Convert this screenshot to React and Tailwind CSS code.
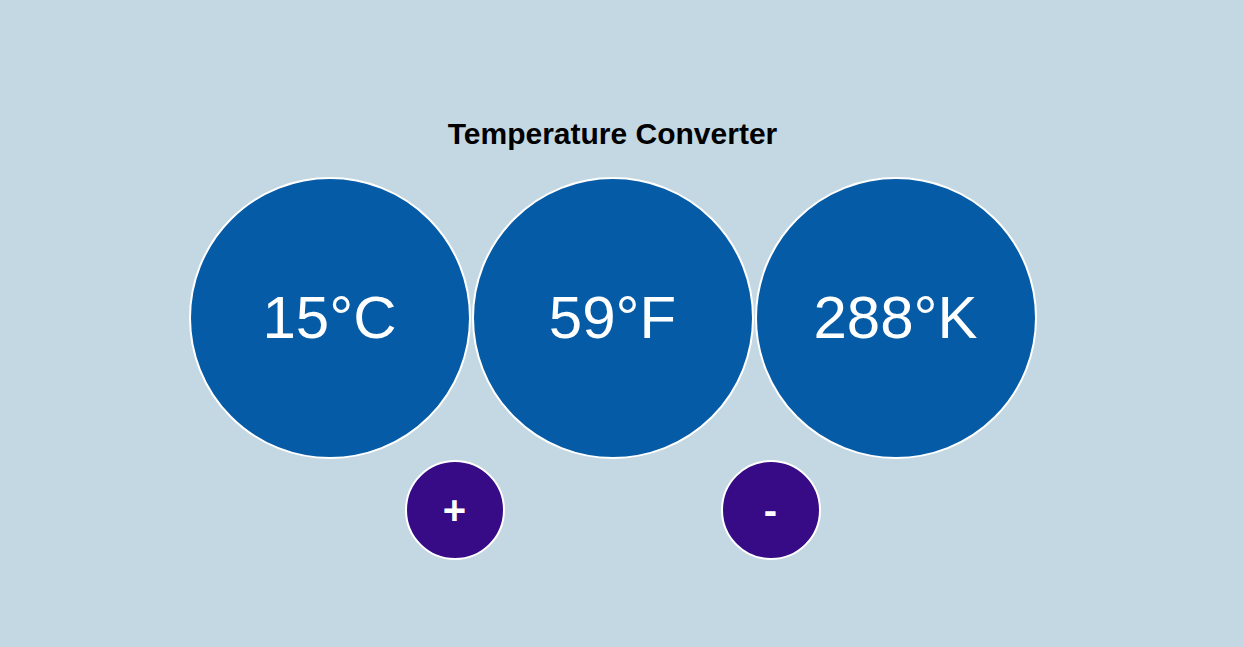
import React, { useState } from 'react';

function App() {
  const [celsius, setCelsius] = useState(15);

  const fahrenheit = Math.round((celsius * 9) / 5 + 32);
  const kelvin = Math.round(celsius + 273);

  const circle =
    'w-[282px] h-[282px] rounded-full bg-[#055ba6] border-2 border-white flex items-center justify-center text-white text-[60px]';
  const btn =
    'w-[100px] h-[100px] rounded-full bg-[#370b85] border-2 border-white flex items-center justify-center text-white text-[40px] font-bold leading-none';

  return (
    <div
      className="min-h-screen w-full bg-[#c4d8e3] flex flex-col items-center pr-[18px] pt-[117px]"
      style={{ fontFamily: '"Liberation Sans", Arial, sans-serif' }}
    >
      <h1 className="text-[30px] font-bold leading-[34px] text-black">Temperature Converter</h1>

      {/* Temperatures */}
      <div className="flex gap-[1px] mt-[26px]">
        <div className={circle}>{celsius}°C</div>
        <div className={circle}>{fahrenheit}°F</div>
        <div className={circle}>{kelvin}°K</div>
      </div>

      {/* Controls */}
      <div className="flex gap-[216px] mt-[1px]">
        <button className={btn} onClick={() => setCelsius(celsius + 1)}>
          +
        </button>
        <button className={btn} onClick={() => setCelsius(celsius - 1)}>
          -
        </button>
      </div>
    </div>
  );
}

export default App;
